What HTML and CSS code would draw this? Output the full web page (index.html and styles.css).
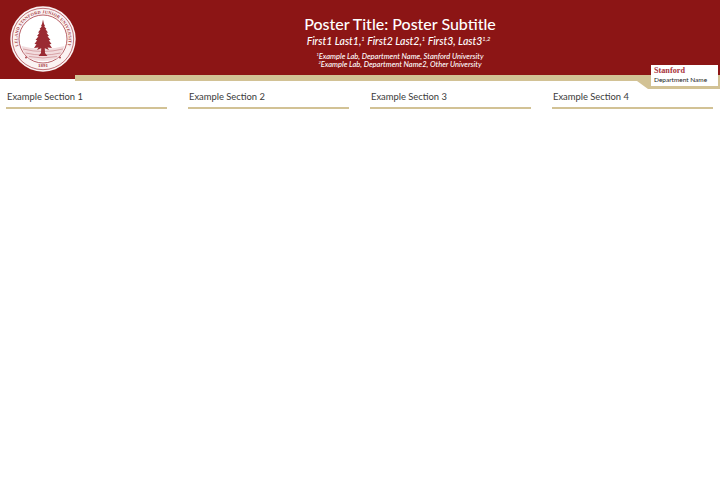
FILE: index.html
```html
<!DOCTYPE html>
<html lang="en">
<head>
<meta charset="utf-8">
<title>Poster</title>
<link rel="stylesheet" href="styles.css">
</head>
<body>
<header class="banner">
  <svg class="seal" viewBox="0 0 66 66" aria-hidden="true">
    <defs>
      <path id="ring" d="M12.030 47.680A25.600 25.600 0 1 1 53.970 47.680"/>
    </defs>
    <circle cx="33" cy="33" r="32.700" fill="#fbf3f3"/>
    <circle cx="33" cy="33" r="30.700" fill="none" stroke="#a63a42" stroke-width=".7"/>
    <circle cx="33" cy="33" r="24" fill="#fff" stroke="#a63a42" stroke-width=".8"/>
    <text class="ring-text"><textPath href="#ring" startOffset="50%" text-anchor="middle">LELAND STANFORD JUNIOR UNIVERSITY</textPath></text>
    <path d="M11.500 40q21.500 6 43 0q-2 8-8 12.500q-13.500 5-27 0q-6-4.500-8-12.500z" fill="#f2dcde"/>
    <path d="M13 43q20 5 40 0M15.500 47q17.500 4 35 0M19 50.500q14 3 28 0" fill="none" stroke="#c47a80" stroke-width=".6"/>
    <path d="M33 13.500L34 18 35 20 34.200 20.500 36.500 23 35.500 23.300 38 26.500 36.500 26.700 39 30 37.500 30.200 40.500 34 38.800 34.200 41.500 38 39.500 38.200 42 42 37.500 41.500 39 44 34.800 42.300 35 47 37.500 50H28.500L31 47 31.200 42.300 27 44 28.500 41.500 24 42 26.500 38.200 24.500 38 27.200 34.200 25.500 34 28.500 30.200 27 30 29.500 26.700 28 26.500 30.500 23.300 29.500 23 31.800 20.500 31 20 32 18Z" fill="#9a2a32"/>
    <circle cx="16" cy="51.500" r=".9" fill="#a63a42"/>
    <circle cx="50" cy="51.500" r=".9" fill="#a63a42"/>
    <text class="year" x="33" y="60.500" text-anchor="middle">1891</text>
  </svg>
  <div class="titles">
    <h1>Poster Title: Poster Subtitle</h1>
    <p class="authors">First1 Last1,<sup>1</sup> First2 Last2,<sup>1</sup> First3, Last3<sup>1,2</sup></p>
    <p class="affil"><sup>1</sup>Example Lab, Department Name, Stanford University</p>
    <p class="affil"><sup>2</sup>Example Lab, Department Name2, Other University</p>
  </div>
  <svg class="band" viewBox="0 0 645 14" aria-hidden="true">
    <path d="M0 0H645V14H573L562 6H0Z" fill="#d2c295"/>
  </svg>
  <div class="brand">
    <div class="brand-name">Stanford</div>
    <div class="brand-dept">Department Name</div>
  </div>
</header>
<main class="sections">
  <section><h2>Example Section 1</h2></section>
  <section><h2>Example Section 2</h2></section>
  <section><h2>Example Section 3</h2></section>
  <section><h2>Example Section 4</h2></section>
</main>
</body>
</html>
```
FILE: styles.css
```css
* { box-sizing: border-box; }
html, body { margin: 0; background: #fff; }
body { font-family: Lato, "Open Sans", sans-serif; color: #333; }
.banner { position: relative; height: 79px; background: #8c1515; }
.seal { position: absolute; left: 10px; top: 6px; width: 66px; height: 66px; }
.ring-text { font-family: "Liberation Serif", serif; font-size: 4.300px; font-weight: 700; fill: #a63a42; letter-spacing: .2px; }
.year { font-family: "Liberation Serif", serif; font-size: 5px; font-weight: 700; fill: #a63a42; }
.titles { padding-top: 14px; padding-left: 80px; text-align: center; color: #fff; }
.titles h1 { margin: 0; font-size: 16px; line-height: 20px; font-weight: 500; }
.authors { margin: 0 0 4px; padding-right: 3px; font-size: 10.500px; line-height: 15px; font-style: italic; font-weight: 500; }
.affil { margin: 0; font-size: 7.500px; line-height: 7.500px; font-style: italic; font-weight: 500; }
sup { font-size: 55%; line-height: 0; }
.band { position: absolute; left: 75px; top: 75px; width: 645px; height: 14px; display: block; }
.brand { position: absolute; left: 651px; top: 65px; width: 67px; height: 21px; background: #fff; padding: 1px 3px; }
.brand-name { font-family: "Liberation Serif", serif; font-weight: 700; font-size: 8.200px; line-height: 10px; color: #a8323a; }
.brand-dept { font-size: 6.500px; line-height: 7.500px; color: #222; }
.sections { display: grid; grid-template-columns: repeat(4, 161px); column-gap: 21px; padding: 12px 0 0 6px; }
.sections h2 { margin: 0; padding: 0 1px 4px; height: 18px; font-size: 9.400px; line-height: 12px; font-weight: 400; border-bottom: 2px solid #d2c295; color: #3a3a3a; }
```
